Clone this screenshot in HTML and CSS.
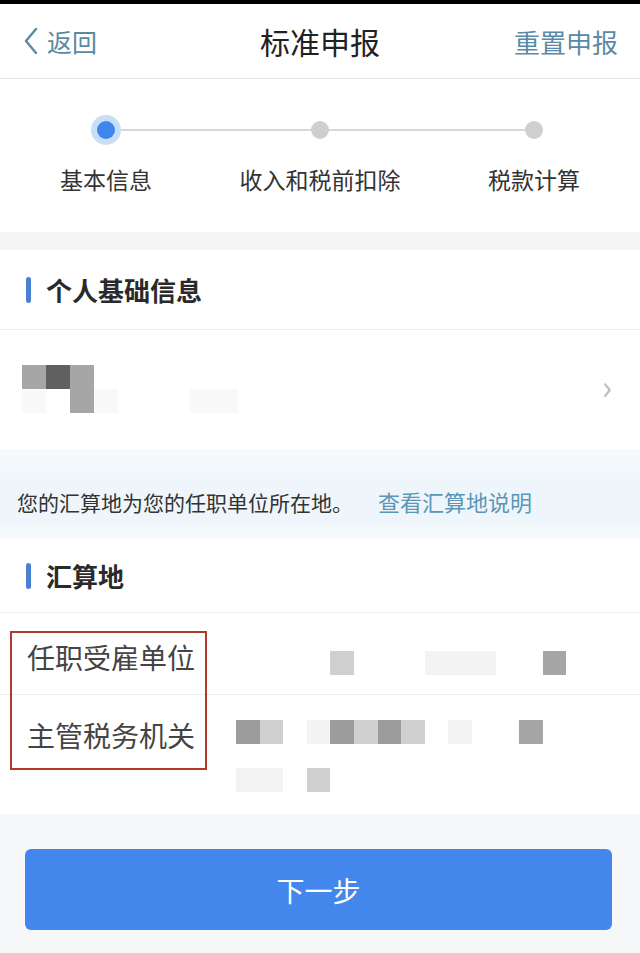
FILE: index.html
```html
<!DOCTYPE html>
<html lang="zh-CN">
<head>
  <meta charset="UTF-8" />
  <title>标准申报</title>
  <link rel="stylesheet" href="styles.css">
</head>
<body>
  <div class="status-bar"></div>

  <header class="nav-bar">
    <a href="#" class="nav-back">
      <svg width="14" height="26" viewBox="0 0 14 26"><polyline points="12,1 2,13 12,25" fill="none" stroke="#5b8aa0" stroke-width="2.4" stroke-linecap="round" stroke-linejoin="round"/></svg>
      <span>返回</span>
    </a>
    <h1 class="nav-title">标准申报</h1>
    <a href="#" class="nav-action">重置申报</a>
  </header>

  <div class="steps">
    <div class="step active">
      <div class="step-dot"></div>
      <div class="step-label">基本信息</div>
    </div>
    <div class="step">
      <div class="step-dot"></div>
      <div class="step-label">收入和税前扣除</div>
    </div>
    <div class="step">
      <div class="step-dot"></div>
      <div class="step-label">税款计算</div>
    </div>
  </div>

  <div class="gap"></div>

  <section class="card">
    <h2 class="card-title">个人基础信息</h2>
    <div class="info-row">
      <div class="mosaic mosaic-person">
        <i style="grid-column: 1; grid-row: 1" class="c-mid"></i>
        <i style="grid-column: 2; grid-row: 1" class="c-dark"></i>
        <i style="grid-column: 3; grid-row: 1 / span 2" class="c-mid"></i>
        <i style="grid-column: 1; grid-row: 2" class="c-ghost"></i>
        <i style="grid-column: 4; grid-row: 2" class="c-ghost"></i>
        <i style="grid-column: 8 / span 2; grid-row: 2" class="c-ghost"></i>
      </div>
      <span class="chevron">&#8250;</span>
    </div>
  </section>

  <div class="notice">
    您的汇算地为您的任职单位所在地。<a href="#" class="notice-link">查看汇算地说明</a>
  </div>

  <section class="card card-place">
    <h2 class="card-title">汇算地</h2>
    <div class="field-row first">
      <div class="field-label">任职受雇单位</div>
      <div class="mosaic mosaic-value">
        <i style="grid-column: 5" class="c-light"></i>
        <i style="grid-column: 9 / span 3" class="c-faint"></i>
        <i style="grid-column: 14" class="c-mid"></i>
      </div>
    </div>
    <div class="field-row second">
      <div class="field-label">主管税务机关</div>
      <div class="mosaic mosaic-value">
        <i style="grid-column: 1" class="c-grey"></i>
        <i style="grid-column: 2" class="c-light"></i>
        <i style="grid-column: 4" class="c-faint"></i>
        <i style="grid-column: 5" class="c-grey"></i>
        <i style="grid-column: 6" class="c-light"></i>
        <i style="grid-column: 7" class="c-grey"></i>
        <i style="grid-column: 8" class="c-light"></i>
        <i style="grid-column: 10" class="c-faint"></i>
        <i style="grid-column: 13" class="c-mid"></i>
        <i style="grid-column: 1 / span 2; grid-row: 2" class="c-faint"></i>
        <i style="grid-column: 4; grid-row: 2" class="c-light"></i>
      </div>
    </div>
    <div class="mark-box"></div>
  </section>

  <footer class="bottom-bar">
    <button class="next-btn">下一步</button>
  </footer>
</body>
</html>
```

FILE: styles.css
```css
* {
  box-sizing: border-box;
  margin: 0;
  padding: 0;
}
body {
  font-family: "Noto Sans CJK SC", "Noto Sans", sans-serif;
  background: #f5f7f8;
  width: 640px;
  min-height: 953px;
  color: #333;
}
a {
  text-decoration: none;
}
.status-bar {
  height: 4px;
  background: #000;
}

/* шапка */
.nav-bar {
  height: 75px;
  background: #fff;
  border-bottom: 1px solid #e6e6e6;
  display: flex;
  align-items: center;
  justify-content: space-between;
  padding: 0 22px 0 24px;
  position: relative;
}
.nav-back {
  display: flex;
  align-items: center;
  gap: 9px;
  color: #5b8aa0;
  font-size: 25px;
}
.nav-title {
  position: absolute;
  left: 0;
  right: 0;
  text-align: center;
  font-size: 30px;
  font-weight: 400;
  color: #222;
  pointer-events: none;
}
.nav-action {
  color: #5a8aa8;
  font-size: 26px;
}

/* кроки */
.steps {
  height: 153px;
  background: #fff;
  display: grid;
  grid-template-columns: repeat(3, 214px);
  justify-content: center;
  padding-top: 37px;
}
.step {
  display: flex;
  flex-direction: column;
  align-items: center;
  position: relative;
}
.step:not(:last-child)::after {
  content: "";
  position: absolute;
  top: 13px;
  left: 50%;
  width: 214px;
  height: 2px;
  background: #d8d8d8;
}
.step-dot {
  width: 18px;
  height: 18px;
  margin: 5px 0;
  border-radius: 50%;
  background: #cfcfcf;
  position: relative;
  z-index: 1;
}
.step.active .step-dot {
  background: #3f86ec;
  box-shadow: 0 0 0 6px #c6dff5;
}
.step-label {
  margin-top: 19px;
  font-size: 23px;
  line-height: 32px;
  color: #333;
}

.gap {
  height: 18px;
  background: #f5f5f5;
}

/* картки */
.card {
  background: #fff;
}
.card-title {
  height: 80px;
  display: flex;
  align-items: center;
  gap: 15px;
  padding-left: 26px;
  font-size: 26px;
  font-weight: 700;
  color: #2a2a2a;
  border-bottom: 1px solid #eeeeee;
}
.card-title::before {
  content: "";
  width: 5px;
  height: 26px;
  border-radius: 3px;
  background: #4a80d2;
}
.info-row {
  height: 119px;
  display: flex;
  align-items: flex-start;
  justify-content: space-between;
  padding: 35px 28px 0 22px;
}
.chevron {
  margin-top: 6px;
  font-size: 34px;
  line-height: 30px;
  color: #bdbdbd;
}

/* мозаїка */
.mosaic {
  display: grid;
  grid-template-columns: repeat(16, 23.6px);
  grid-auto-rows: 24px;
}
.mosaic-person {
  grid-template-columns: repeat(9, 24px);
}
.mosaic i {
  display: block;
}
.c-dark { background: #606060; }
.c-mid { background: #a6a6a6; }
.c-grey { background: #9c9c9c; }
.c-light { background: #cfcfcf; }
.c-faint { background: #f3f3f3; }
.c-ghost { background: #f9f9f9; }

/* підказка */
.notice {
  height: 90px;
  padding: 40px 17px 0;
  background: linear-gradient(#f8fafb, #eff6fb 30%, #eef6fb 80%, #f8fbfc);
  font-size: 21px;
  line-height: 24px;
  color: #333;
}
.notice-link {
  color: #5b96b6;
  margin-left: 25px;
  font-size: 22px;
}

/*汇算地 */
.card-place {
  position: relative;
  height: 275px;
}
.card-place .card-title {
  height: 74px;
}
.field-row {
  display: flex;
  align-items: flex-start;
  padding-left: 27px;
}
.field-row.first {
  height: 82px;
  padding-top: 30px;
  border-bottom: 1px solid #eeeeee;
}
.field-row.second {
  padding-top: 26px;
}
.field-label {
  width: 209px;
  font-size: 28px;
  line-height: 28px;
  color: #444;
}
.field-row.first .mosaic {
  margin-top: 8px;
}
.field-row.second .mosaic {
  margin-top: -1px;
  row-gap: 24px;
}
.mark-box {
  position: absolute;
  left: 10px;
  top: 92px;
  width: 197px;
  height: 139px;
  border: 2px solid #b0392b;
}

/* кнопка */
.bottom-bar {
  padding: 35px 28px 0 25px;
}
.next-btn {
  width: 100%;
  height: 81px;
  border: none;
  border-radius: 6px;
  background: #4386ec;
  color: #fff;
  font-family: inherit;
  font-size: 28px;
}
```
